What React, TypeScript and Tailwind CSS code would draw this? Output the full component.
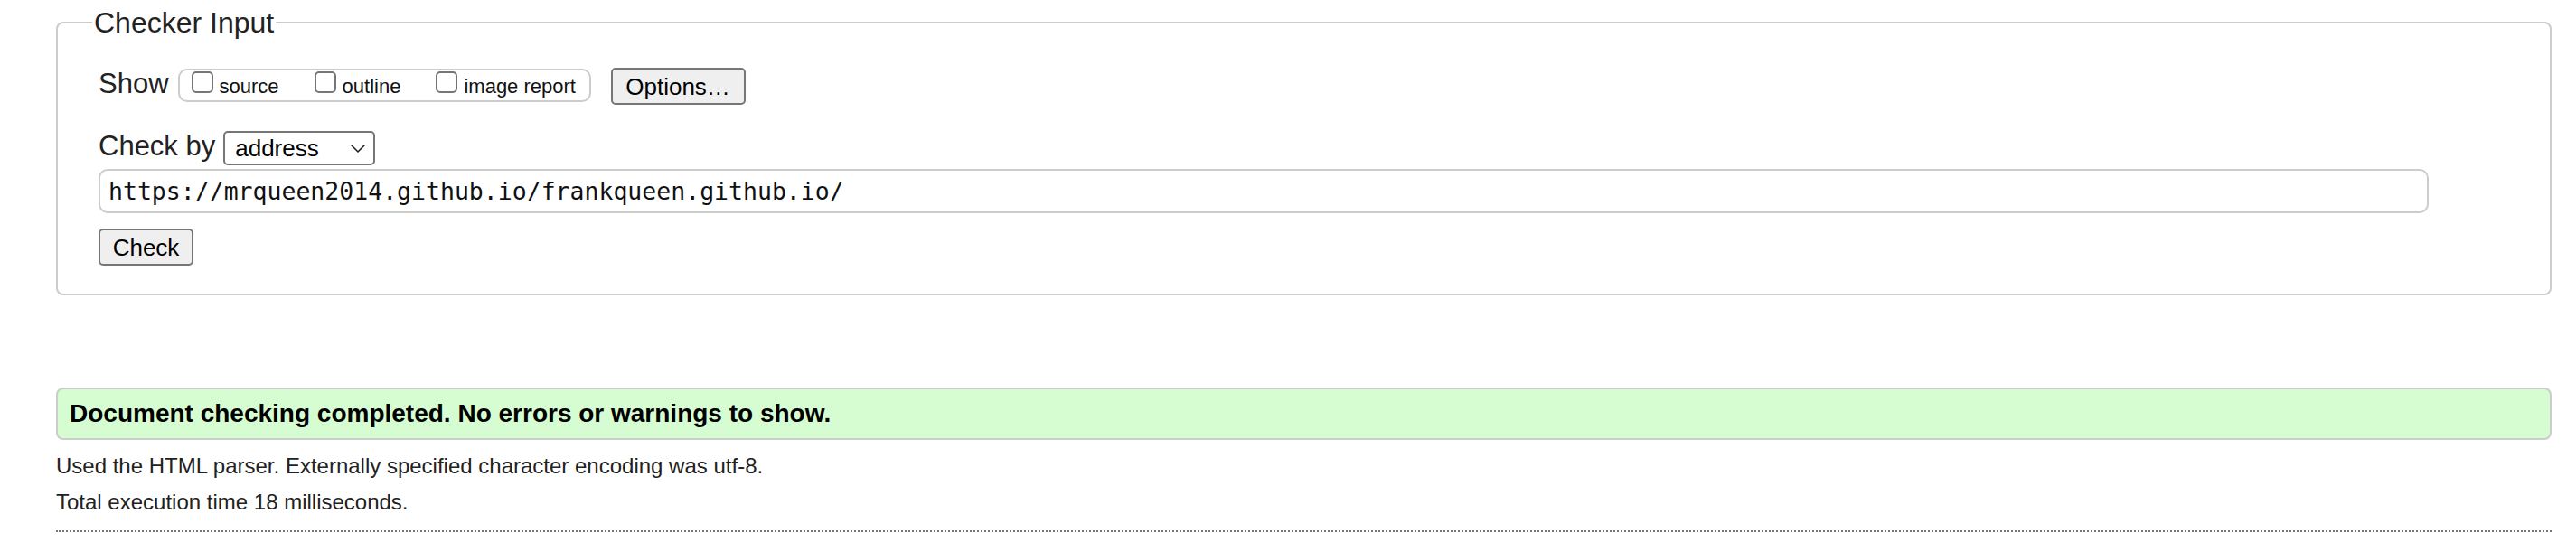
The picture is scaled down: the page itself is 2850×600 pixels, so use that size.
import React from "react";

// Small fake checkbox, drawn so it looks the same in every browser
const Box: React.FC = () => (
  <span className="mt-[1px] block h-[24px] w-[24px] shrink-0 rounded-[5px] border-2 border-[#767676] bg-white" />
);

const ShowOption: React.FC<{ label: string }> = ({ label }) => (
  <label className="flex items-start gap-[7px]">
    <Box />
    <span className="mt-[5px] text-[22px] leading-[25px] text-[#111]">{label}</span>
  </label>
);

const GreyButton: React.FC<{ children: React.ReactNode; className?: string }> = ({ children, className }) => (
  <button
    type="button"
    className={`flex h-[41px] items-center justify-center rounded-[5px] border-2 border-[#767676] bg-[#efefef] text-[26px] leading-none text-black ${className ?? ""}`}
  >
    {children}
  </button>
);

export default function App() {
  return (
    <div className="min-h-[600px] bg-white pt-[7px] font-['Liberation_Sans',Arial,sans-serif] text-[#222]">
      <div className="ml-[62px] mr-[27px]">
        <fieldset className="rounded-[8px] border-2 border-[#cccccc] pb-[31px] pl-[45px] pr-[45px]">
          <legend className="ml-[-7px] px-[2px] text-[32px] leading-[36px] text-[#222]">Checker Input</legend>

          {/* Show row */}
          <div className="mt-[32px] flex h-[41px] items-start">
            <span className="mt-[1px] text-[31px] leading-[34px]">Show</span>
            <div className="ml-[10px] mt-[1px] flex h-[37px] w-[457px] items-start gap-[39px] rounded-[10px] border-2 border-[#cccccc] pl-[13px] pr-[12px]">
              <ShowOption label="source" />
              <ShowOption label="outline" />
              <ShowOption label="image report" />
            </div>
            <GreyButton className="ml-[22px] w-[149px]">Options…</GreyButton>
          </div>

          {/* Check by row */}
          <div className="mt-[29px] flex h-[38px] items-start">
            <span className="text-[31px] leading-[34px]">Check by</span>
            <div className="ml-[9px] flex h-[38px] w-[168px] items-center justify-between rounded-[5px] border-2 border-[#767676] bg-white pl-[11px] pr-[9px]">
              <span className="text-[26px] leading-none text-black">address</span>
              <svg width="16" height="9" viewBox="0 0 16 9" fill="none" className="mt-[1px]">
                <path d="M1 1l7 7 7-7" stroke="#222" strokeWidth="1.6" strokeLinecap="round" strokeLinejoin="round" />
              </svg>
            </div>
          </div>

          <input
            type="text"
            readOnly
            value="https://mrqueen2014.github.io/frankqueen.github.io/"
            className="mt-[4px] block h-[49px] w-[2578px] rounded-[10px] border-2 border-[#cccccc] bg-white pl-[9px] font-['DejaVu_Sans_Mono',monospace] text-[26.5px] text-[#111] outline-none"
          />

          <GreyButton className="mt-[17px] w-[105px]">Check</GreyButton>
        </fieldset>

        <div className="mt-[102px] flex h-[58px] items-center rounded-[8px] border-2 border-[#cccccc] bg-[#d6fcd1] pl-[13px]">
          <span className="text-[28px] font-bold text-black">
            Document checking completed. No errors or warnings to show.
          </span>
        </div>

        <p className="mt-[9px] text-[24px] leading-[40px] text-[#222]">
          Used the HTML parser. Externally specified character encoding was utf-8.
        </p>
        <p className="text-[24px] leading-[40px] text-[#222]">Total execution time 18 milliseconds.</p>

        <div className="mt-[11px] border-t-2 border-dotted border-[#777777]" />
      </div>
    </div>
  );
}
